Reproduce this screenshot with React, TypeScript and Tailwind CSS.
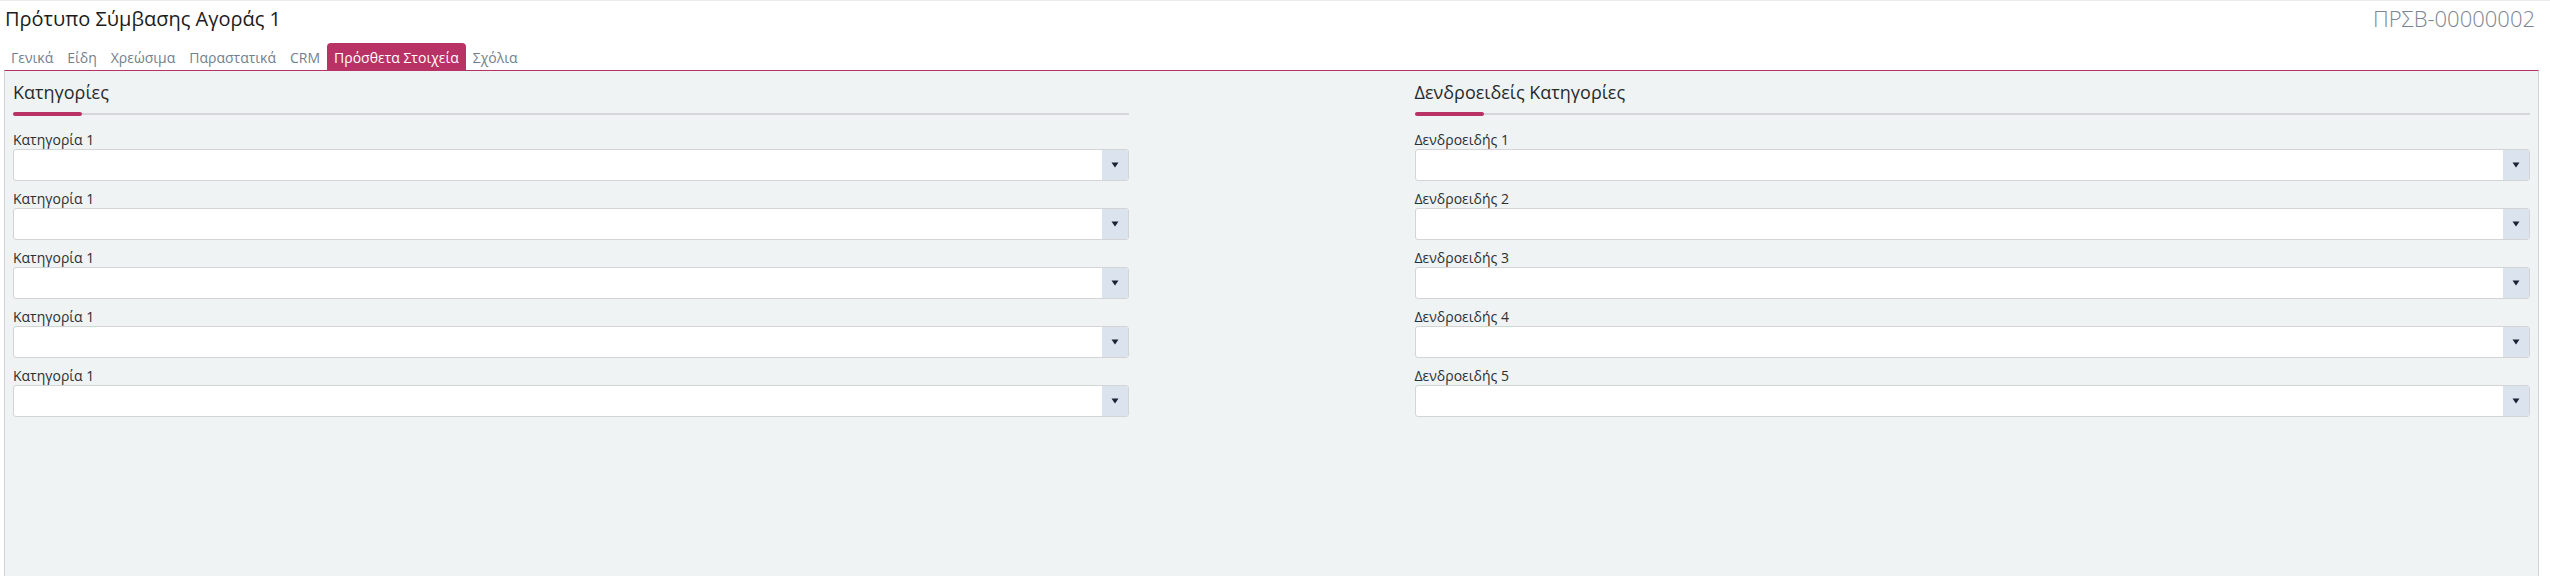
import React from 'react';

const tabs = ['Γενικά', 'Είδη', 'Χρεώσιμα', 'Παραστατικά', 'CRM', 'Πρόσθετα Στοιχεία', 'Σχόλια'];
const activeTab = 'Πρόσθετα Στοιχεία';

const categories = ['Κατηγορία 1', 'Κατηγορία 1', 'Κατηγορία 1', 'Κατηγορία 1', 'Κατηγορία 1'];
const treeCategories = ['Δενδροειδής 1', 'Δενδροειδής 2', 'Δενδροειδής 3', 'Δενδροειδής 4', 'Δενδροειδής 5'];

function SelectField({ label }: { label: string }) {
  return (
    <div className="flex flex-col">
      <label className="text-[14px] leading-[18px] text-[#2b2f33]">{label}</label>
      <div className="flex h-[32px] rounded-[3px] border border-[#d2d4d6] bg-white overflow-hidden">
        <div className="flex-1" />
        <button className="flex w-[26px] items-center justify-center bg-[#dbe3ee]">
          <svg width="8" height="6" viewBox="0 0 8 6">
            <path d="M0.5 0.5 L7.5 0.5 L4 5.5 Z" fill="#1b2233" />
          </svg>
        </button>
      </div>
    </div>
  );
}

function Section({ title, fields }: { title: string; fields: string[] }) {
  return (
    <div className="flex flex-col">
      <h2 className="text-[18px] leading-[24px] text-[#262a2e]">{title}</h2>
      <div className="relative mt-[8px] h-[4px]">
        <div className="absolute left-0 right-0 top-[1px] h-[2px] bg-[#d4d6d9]" />
        <div className="absolute left-0 top-0 h-[4px] w-[69px] rounded-full bg-[#b83266]" />
      </div>
      <div className="mt-[15px] flex flex-col gap-[9px]">
        {fields.map((f, i) => (
          <SelectField key={i} label={f} />
        ))}
      </div>
    </div>
  );
}

export default function App() {
  return (
    <div
      className="flex h-[576px] flex-col overflow-hidden border-t border-[#ececec] bg-white"
      style={{ fontFamily: '"Open Sans", "Noto Sans", sans-serif' }}
    >
      <div className="flex items-start justify-between pl-[5px] pr-[15px] pt-[4px]">
        <h1 className="text-[20px] leading-[27px] text-[#1c1c1c]">Πρότυπο Σύμβασης Αγοράς 1</h1>
        <div className="text-[22px] font-light leading-[27px] text-[#7b8591]">ΠΡΣΒ-00000002</div>
      </div>

      <div className="mt-[11px] flex pl-[4px]">
        {tabs.map((t) =>
          t === activeTab ? (
            <div
              key={t}
              className="rounded-t-[4px] bg-[#b83266] px-[7px] pb-[3px] pt-[5px] text-[14px] leading-[19px] text-white"
            >
              {t}
            </div>
          ) : (
            <div key={t} className="px-[7px] pb-[3px] pt-[5px] text-[14px] leading-[19px] text-[#718090]">
              {t}
            </div>
          )
        )}
      </div>

      <div className="mx-[4px] mr-[11px] flex-1 border-l border-r border-t border-[#d0d2d4] border-t-[#b83266] bg-[#f0f3f4] px-[8px] pt-[9px]">
        <div className="grid grid-cols-2 gap-x-[286px]">
          <Section title="Κατηγορίες" fields={categories} />
          <Section title="Δενδροειδείς Κατηγορίες" fields={treeCategories} />
        </div>
      </div>
    </div>
  );
}
